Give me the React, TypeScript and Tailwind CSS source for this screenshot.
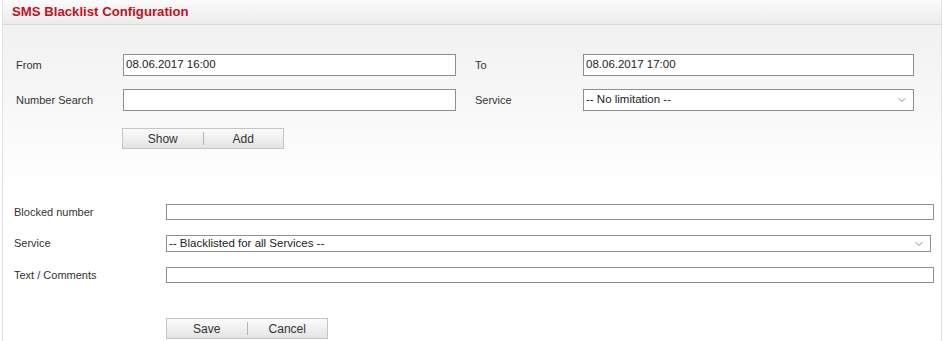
import { ChevronDown } from "lucide-react";

const font = { fontFamily: '"Liberation Sans", Arial, sans-serif' };

const ButtonPair = ({ left, right }: { left: string; right: string }) => (
  <div className="flex w-[162px] h-[21px] border border-[#c4c4c4] bg-gradient-to-b from-[#fbfbfb] to-[#e4e4e4] text-[12px] text-[#333]">
    <button className="flex-1 flex items-center justify-center">{left}</button>
    <span className="w-px h-[13px] self-center bg-[#b5b5b5]" />
    <button className="flex-1 flex items-center justify-center">{right}</button>
  </div>
);

const TextBox = ({ value = "", className = "" }: { value?: string; className?: string }) => (
  <div className={`border border-[#8f8f8f] bg-white flex items-center px-[2px] text-[11.5px] text-[#222] ${className}`}>
    {value}
  </div>
);

const SelectBox = ({ value, className = "" }: { value: string; className?: string }) => (
  <div className={`border border-[#8f8f8f] bg-white flex items-center justify-between pl-[2px] pr-[5px] text-[11.5px] text-[#222] ${className}`}>
    <span>{value}</span>
    <ChevronDown className="w-[12px] h-[12px] text-[#666]" strokeWidth={1.5} />
  </div>
);

const Label = ({ children, className = "" }: { children: string; className?: string }) => (
  <span className={`shrink-0 text-[11px] text-[#333] ${className}`}>{children}</span>
);

export default function App() {
  return (
    <div className="w-[943px] h-[341px] bg-white overflow-hidden pl-[2px]" style={font}>
      <div className="w-[940px] h-full border-l border-r border-[#e2e2e2] flex flex-col">
        {/* header */}
        <div className="h-[25px] shrink-0 border-b border-[#dadada] bg-gradient-to-b from-[#fbfbfb] to-[#ebebeb] flex items-center pl-[9px]">
          <h1 className="text-[13.2px] font-bold text-[#c1121c]">SMS Blacklist Configuration</h1>
        </div>

        {/* filter section */}
        <div className="bg-gradient-to-b from-[#f1f1f1] to-white pt-[29px] pb-[40px]">
          <div className="flex items-center h-[22px]">
            <Label className="w-[120px] pl-[13px]">From</Label>
            <TextBox value="08.06.2017 16:00" className="w-[333px] h-[22px]" />
            <Label className="w-[127px] pl-[19px]">To</Label>
            <TextBox value="08.06.2017 17:00" className="w-[331px] h-[22px]" />
          </div>
          <div className="flex items-center h-[22px] mt-[13px]">
            <Label className="w-[120px] pl-[13px]">Number Search</Label>
            <TextBox className="w-[333px] h-[22px]" />
            <Label className="w-[127px] pl-[19px]">Service</Label>
            <SelectBox value="-- No limitation --" className="w-[331px] h-[22px]" />
          </div>
          <div className="pl-[119px] mt-[17px]">
            <ButtonPair left="Show" right="Add" />
          </div>
        </div>

        {/* blacklist form */}
        <div className="pt-[15px]">
          <div className="flex items-center h-[16px]">
            <Label className="w-[163px] pl-[11px]">Blocked number</Label>
            <TextBox className="w-[768px] h-[16px]" />
          </div>
          <div className="flex items-center h-[17px] mt-[15px]">
            <Label className="w-[163px] pl-[11px]">Service</Label>
            <SelectBox value="-- Blacklisted for all Services --" className="w-[765px] h-[17px]" />
          </div>
          <div className="flex items-center h-[16px] mt-[15px]">
            <Label className="w-[163px] pl-[11px]">Text / Comments</Label>
            <TextBox className="w-[768px] h-[16px]" />
          </div>
          <div className="pl-[163px] mt-[35px]">
            <ButtonPair left="Save" right="Cancel" />
          </div>
        </div>
      </div>
    </div>
  );
}
